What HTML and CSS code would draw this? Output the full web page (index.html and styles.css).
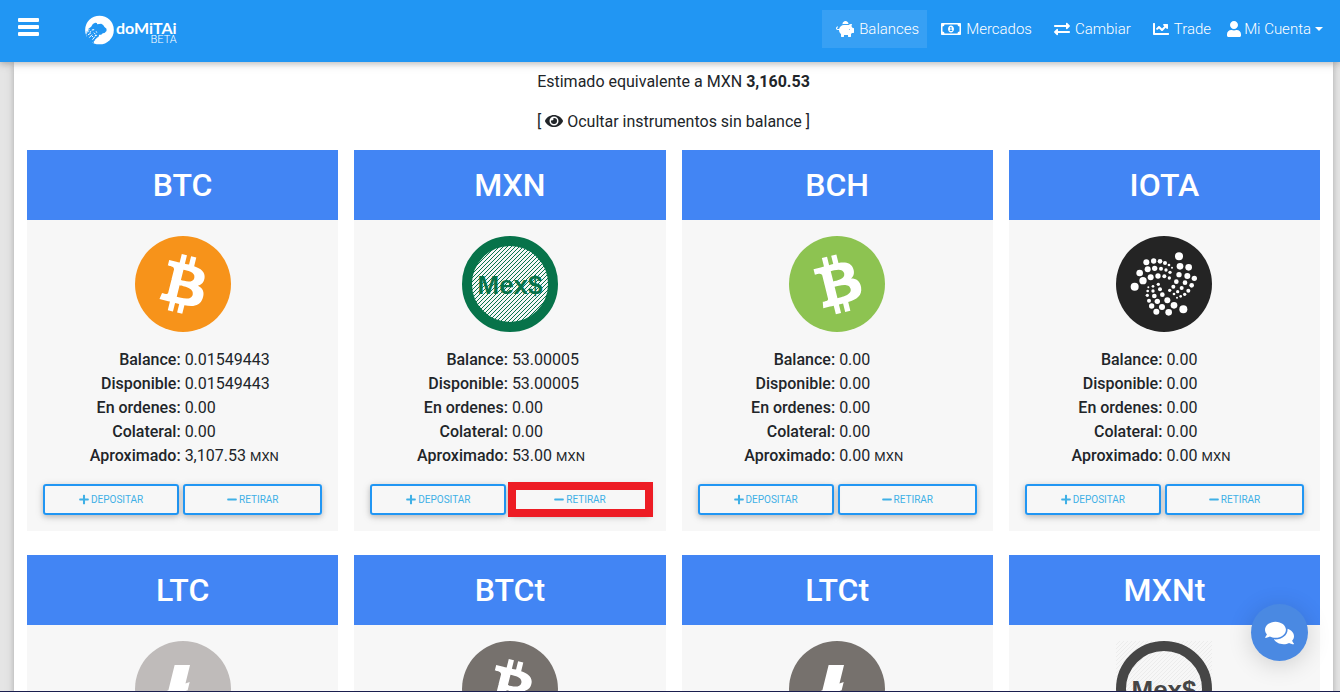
FILE: index.html
```html
<!DOCTYPE html>
<html lang="es">
<head>
    <meta charset="UTF-8">
    <meta name="viewport" content="width=device-width, initial-scale=1.0">
    <title>Domitai - Balances</title>
    <link rel="stylesheet" href="styles.css">
</head>
<body>
    <!-- icons -->
    <svg class="sprite" aria-hidden="true">
        <symbol id="i-bars" viewBox="0 0 21 18"><path d="M1 0h19a1 1 0 0 1 1 1v2a1 1 0 0 1-1 1H1a1 1 0 0 1-1-1V1a1 1 0 0 1 1-1zM1 7h19a1 1 0 0 1 1 1v2a1 1 0 0 1-1 1H1a1 1 0 0 1-1-1V8a1 1 0 0 1 1-1zM1 14h19a1 1 0 0 1 1 1v2a1 1 0 0 1-1 1H1a1 1 0 0 1-1-1v-2a1 1 0 0 1 1-1z"/></symbol>
        <symbol id="i-piggy" viewBox="0 0 576 512"><path d="M560 224h-29.5c-8.8-20-21.6-37.7-37.4-52.5L512 96h-32c-29.4 0-55.4 13.5-73 34.3-7.6-1.1-15.1-2.3-23-2.3H256c-77.4 0-141.9 55-156.8 128H56c-14.8 0-26.5-13.5-23.5-28.8C34.7 215.8 45.4 208 57 208h1c3.3 0 6-2.7 6-6v-20c0-3.3-2.7-6-6-6-28.5 0-53.9 20.4-57.5 48.6C-3.9 258.8 22.7 288 56 288h40c0 52.2 25.4 98.1 64 127.3V496c0 8.8 7.2 16 16 16h64c8.8 0 16-7.2 16-16v-48h128v48c0 8.8 7.2 16 16 16h64c8.8 0 16-7.2 16-16v-80.7c11.8-8.9 22.3-19.4 31.3-31.3H560c8.8 0 16-7.2 16-16V240c0-8.8-7.2-16-16-16zm-128 64c-8.8 0-16-7.2-16-16s7.2-16 16-16 16 7.2 16 16-7.2 16-16 16zM256 96h128c5.4 0 10.7.4 15.9.8 0-.3.1-.5.1-.8 0-53-43-96-96-96s-96 43-96 96c0 2.1.5 4.1.6 6.2 15.2-3.9 31-6.2 47.4-6.2z"/></symbol>
        <symbol id="i-money" viewBox="0 0 640 512"><path d="M320 144c-53.02 0-96 50.14-96 112 0 61.85 42.98 112 96 112 53 0 96-50.13 96-112 0-61.86-42.98-112-96-112zm40 168c0 4.42-3.58 8-8 8h-64c-4.42 0-8-3.58-8-8v-16c0-4.42 3.58-8 8-8h16v-55.44l-.47.31a7.992 7.992 0 0 1-11.09-2.22l-8.88-13.31a7.992 7.992 0 0 1 2.22-11.09l15.33-10.22a23.99 23.99 0 0 1 13.31-4.03H328c4.42 0 8 3.58 8 8v88h16c4.42 0 8 3.58 8 8v16zM608 64H32C14.33 64 0 78.33 0 96v320c0 17.67 14.33 32 32 32h576c17.67 0 32-14.33 32-32V96c0-17.67-14.33-32-32-32zm-16 272c-35.35 0-64 28.65-64 64H112c0-35.35-28.65-64-64-64V176c35.35 0 64-28.65 64-64h416c0 35.35 28.65 64 64 64v160z"/></symbol>
        <symbol id="i-exchange" viewBox="0 0 512 512"><path d="M0 168v-16c0-13.255 10.745-24 24-24h360V80c0-21.367 25.899-32.042 40.971-16.971l80 80c9.372 9.373 9.372 24.569 0 33.941l-80 80C409.956 271.982 384 261.456 384 240v-48H24c-13.255 0-24-10.745-24-24zm488 152H128v-48c0-21.314-25.862-32.08-40.971-16.971l-80 80c-9.372 9.373-9.372 24.569 0 33.941l80 80C102.057 463.997 128 453.437 128 432v-48h360c13.255 0 24-10.745 24-24v-16c0-13.255-10.745-24-24-24z"/></symbol>
        <symbol id="i-chart" viewBox="0 0 512 512"><path d="M496 384H64V80c0-8.84-7.16-16-16-16H16C7.16 64 0 71.16 0 80v336c0 17.67 14.33 32 32 32h464c8.84 0 16-7.16 16-16v-32c0-8.84-7.16-16-16-16zM464 96H345.94c-21.38 0-32.09 25.85-16.97 40.97l32.4 32.4L288 242.75l-73.37-73.37c-12.5-12.5-32.76-12.5-45.25 0l-68.69 68.69c-6.25 6.25-6.25 16.38 0 22.63l22.62 22.62c6.25 6.25 16.38 6.25 22.63 0L192 237.25l73.37 73.37c12.5 12.5 32.76 12.5 45.25 0l96-96 32.4 32.4c15.12 15.12 40.97 4.41 40.97-16.97V112c.01-8.84-7.15-16-15.99-16z"/></symbol>
        <symbol id="i-user" viewBox="0 0 448 512"><path d="M224 256c70.7 0 128-57.3 128-128S294.7 0 224 0 96 57.3 96 128s57.3 128 128 128zm89.6 32h-16.7c-22.2 10.2-46.9 16-72.9 16s-50.6-5.8-72.9-16h-16.7C60.2 288 0 348.2 0 422.4V464c0 26.5 21.5 48 48 48h352c26.5 0 48-21.5 48-48v-41.6c0-74.2-60.2-134.4-134.4-134.4z"/></symbol>
        <symbol id="i-eye" viewBox="0 0 576 512"><path d="M572.52 241.4C518.29 135.59 410.93 64 288 64S57.68 135.64 3.48 241.41a32.35 32.35 0 0 0 0 29.19C57.71 376.41 165.07 448 288 448s230.32-71.64 284.52-177.41a32.35 32.35 0 0 0 0-29.19zM288 400a144 144 0 1 1 144-144 143.93 143.93 0 0 1-144 144zm0-240a95.31 95.31 0 0 0-25.31 3.79 47.85 47.85 0 0 1-66.9 66.9A95.78 95.78 0 1 0 288 160z"/></symbol>
        <symbol id="i-comments" viewBox="0 0 576 512"><path d="M416 192c0-88.4-93.1-160-208-160S0 103.6 0 192c0 34.3 14.1 65.9 38 92-13.4 30.2-35.5 54.2-35.8 54.5-2.2 2.3-2.8 5.7-1.5 8.7S4.8 352 8 352c36.6 0 66.9-12.3 88.7-25 32.2 15.7 70.3 25 111.3 25 114.9 0 208-71.6 208-160zm122 220c23.9-26 38-57.7 38-92 0-66.9-53.5-124.2-129.3-148.1.9 6.6 1.3 13.3 1.3 20.1 0 105.9-107.7 192-240 192-10.8 0-21.3-.8-31.7-1.9C207.8 439.6 281.8 480 368 480c41 0 79.1-9.2 111.3-25 21.8 12.7 52.1 25 88.7 25 3.2 0 6.1-1.9 7.3-4.8 1.3-2.9.7-6.3-1.5-8.7-.3-.3-22.4-24.2-35.8-54.5z"/></symbol>
        <symbol id="i-plus" viewBox="0 0 448 512"><path d="M416 208H272V64c0-17.67-14.33-32-32-32h-32c-17.67 0-32 14.33-32 32v144H32c-17.67 0-32 14.33-32 32v32c0 17.67 14.33 32 32 32h144v144c0 17.67 14.33 32 32 32h32c17.67 0 32-14.33 32-32V304h144c17.67 0 32-14.33 32-32v-32c0-17.67-14.33-32-32-32z"/></symbol>
        <symbol id="i-minus" viewBox="0 0 448 512"><path d="M416 208H32c-17.67 0-32 14.33-32 32v32c0 17.67 14.33 32 32 32h384c17.67 0 32-14.33 32-32v-32c0-17.67-14.33-32-32-32z"/></symbol>
        <symbol id="c-btc" viewBox="0 0 32 32"><path d="M23.189 14.02c.314-2.096-1.283-3.223-3.465-3.975l.708-2.84-1.728-.43-.69 2.765c-.454-.114-.92-.22-1.385-.326l.695-2.783L15.596 6l-.708 2.839c-.376-.086-.746-.17-1.104-.26l.002-.009-2.384-.595-.46 1.846s1.283.294 1.256.312c.7.175.826.638.805 1.006l-.806 3.235c.048.012.11.03.18.057l-.183-.045-1.13 4.532c-.086.212-.303.531-.793.41.018.025-1.256-.313-1.256-.313l-.858 1.978 2.25.561c.418.105.828.215 1.231.318l-.715 2.872 1.727.43.708-2.84c.472.127.93.245 1.378.357l-.706 2.828 1.728.43.715-2.866c2.948.558 5.164.333 6.097-2.333.752-2.146-.037-3.385-1.588-4.192 1.13-.26 1.98-1.003 2.207-2.538zm-3.95 5.538c-.533 2.147-4.148.986-5.32.695l.95-3.805c1.172.293 4.929.872 4.37 3.11zm.535-5.569c-.487 1.953-3.495.96-4.47.717l.86-3.45c.975.243 4.118.696 3.61 2.733z"/></symbol>
        <symbol id="c-ltc" viewBox="0 0 32 32"><path d="M10.427 19.214L9 19.768l.688-2.759 1.444-.58L13.213 8h5.129l-1.519 6.196 1.41-.571-.68 2.75-1.427.571-.848 3.483H23L22.127 24H9.252z"/></symbol>
    </svg>

    <header class="navbar">
        <button class="menu-btn" type="button" aria-label="Menu"><svg class="icon-bars"><use href="#i-bars"/></svg></button>
        <a class="brand" href="#">
            <svg class="brand-logo" viewBox="254 45 86 90">
                <circle cx="297" cy="90" r="43" fill="#fff"/>
                <path d="M272 80l5-8 7-4 5 1 1 4 12-2 6 4 4 6 6 5 0 7-6 6-5 1-5 4-6 0-2 7-5 2-5 8-6 6-5 2-9-6-5-9-2-11 4-6 2-10z" fill="#2196f3"/>
                <path d="M257 84l10-5M256 92l11-3M262 105l9-6M266 113l9-9M276 119l7-9M282 126l5-9M290 119l5-5M280 98l5 5M274 90l7-1M268 97l4-3M283 107l6-1M275 108l2 3M286 95l4 2M262 97l3-3" stroke="#fff" stroke-width="3"/>
                <path d="M258 96l3 2M259 103l3 2M263 112l3 3M270 121l4 3M277 126l3 2" stroke="#2196f3" stroke-width="3"/>
            </svg>
            <span class="brand-text">
                <span class="brand-name">doMiTAi</span>
                <span class="brand-beta">BETA</span>
            </span>
        </a>
        <nav class="nav">
            <a class="nav-link active" href="#"><svg class="icon w18"><use href="#i-piggy"/></svg>Balances</a>
            <a class="nav-link" href="#"><svg class="icon w20"><use href="#i-money"/></svg>Mercados</a>
            <a class="nav-link" href="#"><svg class="icon w16"><use href="#i-exchange"/></svg>Cambiar</a>
            <a class="nav-link" href="#"><svg class="icon w16"><use href="#i-chart"/></svg>Trade</a>
            <a class="nav-link account" href="#"><svg class="icon w14"><use href="#i-user"/></svg>Mi Cuenta<span class="caret"></span></a>
        </nav>
    </header>

    <main class="sheet">
        <p class="summary">Estimado equivalente a MXN <strong>3,160.53</strong></p>
        <p class="summary">[ <a href="#"><svg class="icon w18"><use href="#i-eye"/></svg> Ocultar instrumentos sin balance</a> ]</p>

        <div class="cards">
            <section class="card">
                <h2>BTC</h2>
                <div class="card-body">
                    <svg class="coin" viewBox="0 0 32 32"><circle cx="16" cy="16" r="16" fill="#f7931a"/><use href="#c-btc" width="32" height="32" fill="#fff"/></svg>
                    <dl>
                        <dt>Balance:</dt><dd>0.01549443</dd>
                        <dt>Disponible:</dt><dd>0.01549443</dd>
                        <dt>En ordenes:</dt><dd>0.00</dd>
                        <dt>Colateral:</dt><dd>0.00</dd>
                        <dt>Aproximado:</dt><dd>3,107.53 <small>MXN</small></dd>
                    </dl>
                    <div class="actions">
                        <button class="btn" type="button"><svg><use href="#i-plus"/></svg>DEPOSITAR</button>
                        <button class="btn" type="button"><svg><use href="#i-minus"/></svg>RETIRAR</button>
                    </div>
                </div>
            </section>

            <section class="card">
                <h2>MXN</h2>
                <div class="card-body">
                    <svg class="coin" viewBox="0 0 96 96">
                        <defs>
                            <pattern id="hatch" width="4" height="4" patternUnits="userSpaceOnUse">
                                <path d="M-1 1l2-2M0 4l4-4M3 5l2-2" stroke="#07734a"/>
                            </pattern>
                        </defs>
                        <circle cx="48" cy="48" r="43" fill="#f7f7f7"/>
                        <circle cx="48" cy="48" r="43" fill="url(#hatch)"/>
                        <circle cx="48" cy="48" r="43" fill="none" stroke="#07734a" stroke-width="10"/>
                        <text class="mex" x="48" y="58" fill="#07734a">Mex$</text>
                    </svg>
                    <dl>
                        <dt>Balance:</dt><dd>53.00005</dd>
                        <dt>Disponible:</dt><dd>53.00005</dd>
                        <dt>En ordenes:</dt><dd>0.00</dd>
                        <dt>Colateral:</dt><dd>0.00</dd>
                        <dt>Aproximado:</dt><dd>53.00 <small>MXN</small></dd>
                    </dl>
                    <div class="actions">
                        <button class="btn" type="button"><svg><use href="#i-plus"/></svg>DEPOSITAR</button>
                        <button class="btn marked" type="button"><svg><use href="#i-minus"/></svg>RETIRAR</button>
                    </div>
                </div>
            </section>

            <section class="card">
                <h2>BCH</h2>
                <div class="card-body">
                    <svg class="coin" viewBox="0 0 32 32"><circle cx="16" cy="16" r="16" fill="#8dc351"/><g transform="rotate(-28 16 16)"><use href="#c-btc" width="32" height="32" fill="#fff"/></g></svg>
                    <dl>
                        <dt>Balance:</dt><dd>0.00</dd>
                        <dt>Disponible:</dt><dd>0.00</dd>
                        <dt>En ordenes:</dt><dd>0.00</dd>
                        <dt>Colateral:</dt><dd>0.00</dd>
                        <dt>Aproximado:</dt><dd>0.00 <small>MXN</small></dd>
                    </dl>
                    <div class="actions">
                        <button class="btn" type="button"><svg><use href="#i-plus"/></svg>DEPOSITAR</button>
                        <button class="btn" type="button"><svg><use href="#i-minus"/></svg>RETIRAR</button>
                    </div>
                </div>
            </section>

            <section class="card">
                <h2>IOTA</h2>
                <div class="card-body">
                    <svg class="coin" viewBox="33 33 288 288">
                        <circle cx="177" cy="177" r="144" fill="#242424"/>
                        <g fill="#fff">
                            <circle cx="222" cy="94" r="12"/><circle cx="225" cy="124" r="10"/><circle cx="251" cy="127" r="10"/>
                            <circle cx="222" cy="149" r="8"/><circle cx="247" cy="153" r="9"/><circle cx="268" cy="160" r="8"/>
                            <circle cx="214" cy="170" r="7"/><circle cx="240" cy="173" r="7"/><circle cx="260" cy="181" r="7"/>
                            <circle cx="205" cy="185" r="6"/><circle cx="230" cy="189" r="6"/><circle cx="250" cy="197" r="6"/>
                            <circle cx="194" cy="196" r="5"/><circle cx="218" cy="200" r="5"/><circle cx="239" cy="208" r="5"/>
                            <circle cx="207" cy="207" r="4"/><circle cx="227" cy="214" r="4"/><circle cx="216" cy="218" r="3"/>
                            <circle cx="124" cy="112" r="9"/><circle cx="146" cy="108" r="8"/><circle cx="165" cy="109" r="7"/>
                            <circle cx="180" cy="114" r="6"/><circle cx="192" cy="120" r="4"/><circle cx="201" cy="128" r="3"/>
                            <circle cx="104" cy="144" r="10"/><circle cx="128" cy="133" r="9"/><circle cx="149" cy="130" r="8"/>
                            <circle cx="168" cy="131" r="6"/><circle cx="183" cy="135" r="5"/><circle cx="195" cy="142" r="5"/>
                            <circle cx="89" cy="185" r="12"/><circle cx="114" cy="167" r="11"/><circle cx="137" cy="157" r="9"/>
                            <circle cx="159" cy="153" r="8"/><circle cx="178" cy="154" r="6"/><circle cx="193" cy="159" r="5"/>
                            <circle cx="160" cy="178" r="5"/><circle cx="144" cy="184" r="4"/><circle cx="130" cy="187" r="3"/>
                            <circle cx="165" cy="193" r="6"/><circle cx="144" cy="198" r="5"/><circle cx="128" cy="198" r="4"/>
                            <circle cx="172" cy="209" r="7"/><circle cx="148" cy="213" r="7"/><circle cx="127" cy="211" r="5"/>
                            <circle cx="187" cy="226" r="9"/><circle cx="157" cy="229" r="8"/><circle cx="132" cy="227" r="6"/>
                            <circle cx="207" cy="241" r="10"/><circle cx="171" cy="246" r="9"/><circle cx="140" cy="243" r="8"/>
                            <circle cx="235" cy="253" r="12"/><circle cx="191" cy="262" r="10"/><circle cx="154" cy="260" r="9"/>
                        </g>
                    </svg>
                    <dl>
                        <dt>Balance:</dt><dd>0.00</dd>
                        <dt>Disponible:</dt><dd>0.00</dd>
                        <dt>En ordenes:</dt><dd>0.00</dd>
                        <dt>Colateral:</dt><dd>0.00</dd>
                        <dt>Aproximado:</dt><dd>0.00 <small>MXN</small></dd>
                    </dl>
                    <div class="actions">
                        <button class="btn" type="button"><svg><use href="#i-plus"/></svg>DEPOSITAR</button>
                        <button class="btn" type="button"><svg><use href="#i-minus"/></svg>RETIRAR</button>
                    </div>
                </div>
            </section>

            <section class="card">
                <h2>LTC</h2>
                <div class="card-body">
                    <svg class="coin" viewBox="0 0 32 32"><circle cx="16" cy="16" r="16" fill="#bfbbba"/><use href="#c-ltc" width="32" height="32" fill="#fff"/></svg>
                </div>
            </section>

            <section class="card">
                <h2>BTCt</h2>
                <div class="card-body">
                    <svg class="coin" viewBox="0 0 32 32"><circle cx="16" cy="16" r="16" fill="#76716d"/><use href="#c-btc" width="32" height="32" fill="#fff"/></svg>
                </div>
            </section>

            <section class="card">
                <h2>LTCt</h2>
                <div class="card-body">
                    <svg class="coin" viewBox="0 0 32 32"><circle cx="16" cy="16" r="16" fill="#76716d"/><use href="#c-ltc" width="32" height="32" fill="#fff"/></svg>
                </div>
            </section>

            <section class="card">
                <h2>MXNt</h2>
                <div class="card-body">
                    <svg class="coin" viewBox="0 0 96 96">
                        <defs>
                            <pattern id="hatch-light" width="4" height="4" patternUnits="userSpaceOnUse">
                                <path d="M-1 1l2-2M0 4l4-4M3 5l2-2" stroke="#ececec"/>
                            </pattern>
                        </defs>
                        <rect width="96" height="96" fill="url(#hatch-light)"/>
                        <circle cx="48" cy="48" r="43" fill="none" stroke="#464646" stroke-width="10"/>
                        <text class="mex" x="48" y="58" fill="#464646">Mex$</text>
                    </svg>
                </div>
            </section>
        </div>
    </main>

    <button class="chat" type="button" aria-label="Chat"><svg><use href="#i-comments"/></svg></button>
    <div class="bottom-line"></div>
</body>
</html>
```

FILE: styles.css
```css
* {
  box-sizing: border-box;
}

html {
  scrollbar-width: none;
}

body {
  margin: 0;
  font-family: Roboto, sans-serif;
  font-size: 16px;
  font-weight: 400;
  line-height: 24px;
  color: #212529;
  background-color: #e5e5e5;
}

a {
  color: inherit;
  text-decoration: none;
}

button {
  font-family: inherit;
  cursor: pointer;
}

.sprite {
  display: none;
}

/* navbar */
.navbar {
  position: sticky;
  top: 0;
  z-index: 10;
  display: flex;
  align-items: center;
  height: 62px;
  padding: 0 9px 4px 18px;
  color: #fff;
  background-color: #2196f3;
  box-shadow: 0 2px 5px rgba(0, 0, 0, 0.16), 0 2px 10px rgba(0, 0, 0, 0.12);
}

.menu-btn {
  display: flex;
  padding: 0;
  border: none;
  background: none;
  color: #fff;
}

.icon-bars {
  width: 21px;
  height: 18px;
  margin-bottom: 4px;
  fill: currentColor;
}

.brand {
  display: flex;
  align-items: center;
  gap: 2px;
  margin: 2px auto 0 46px;
}

.brand-logo {
  width: 29px;
  height: 30px;
}

.brand-text {
  display: flex;
  flex-direction: column;
  align-items: flex-end;
  padding-top: 6px;
}

.brand-name {
  font-family: Lato, sans-serif;
  font-size: 16px;
  font-weight: 700;
  line-height: 13px;
}

.brand-beta {
  font-size: 11px;
  font-weight: 300;
  line-height: 12px;
}

.nav {
  display: flex;
}

.nav-link {
  display: flex;
  align-items: center;
  padding: 7px 8px 7px 14px;
  font-size: 15px;
  font-weight: 300;
}

.nav-link .icon {
  margin-right: 5px;
}

.nav-link.active {
  background-color: rgba(255, 255, 255, 0.1);
}

.nav-link.account {
  padding-left: 8px;
}

.nav-link.account .icon {
  margin-right: 3px;
}

.caret {
  margin-left: 4px;
  border-top: 4px solid;
  border-left: 4px solid transparent;
  border-right: 4px solid transparent;
}

.icon {
  height: 16px;
  fill: currentColor;
}

.w14 { width: 14px; }
.w16 { width: 16px; }
.w18 { width: 18px; }
.w20 { width: 20px; }

/* content */
.sheet {
  margin: 0 7px 0 14px;
  padding: 8px 13px 0;
  background-color: #fff;
  box-shadow: 0 2px 5px rgba(0, 0, 0, 0.16), 0 2px 10px rgba(0, 0, 0, 0.12);
}

.summary {
  margin: 0 0 16px;
  text-align: center;
}

.summary .icon {
  vertical-align: -2px;
}

.summary strong {
  font-weight: 700;
}

.cards {
  display: grid;
  grid-template-columns: repeat(4, 1fr);
  gap: 24px 16px;
}

.card {
  background-color: #f7f7f7;
}

.card h2 {
  margin: 0;
  padding: 15px;
  font-size: 32px;
  font-weight: 500;
  line-height: 40px;
  text-align: center;
  color: #fff;
  background-color: #4285f4;
}

.card-body {
  padding: 16px;
}

.coin {
  display: block;
  width: 96px;
  height: 96px;
  margin: 0 auto 16px;
}

.mex {
  font-family: "Liberation Sans", sans-serif;
  font-size: 26px;
  font-weight: 700;
  text-anchor: middle;
}

dl {
  display: grid;
  grid-template-columns: 1fr 1fr;
  column-gap: 4px;
  margin: 0 0 16px;
}

dt {
  font-weight: 500;
  text-align: right;
}

dd {
  margin: 0;
}

dd small {
  font-size: 13px;
  line-height: 1;
}

.actions {
  display: grid;
  grid-template-columns: 49fr 50fr;
  gap: 4px;
}

.btn {
  position: relative;
  display: flex;
  align-items: center;
  justify-content: center;
  gap: 2px;
  height: 31px;
  padding: 0;
  border: 2px solid #2196f3;
  border-radius: 3px;
  font-size: 10px;
  font-weight: 400;
  color: #3fb0e6;
  background: none;
  box-shadow: 0 2px 5px rgba(0, 0, 0, 0.16), 0 2px 10px rgba(0, 0, 0, 0.12);
}

.btn svg {
  width: 10px;
  height: 11px;
  fill: currentColor;
}

/* red frame around the highlighted button */
.btn.marked::after {
  content: "";
  position: absolute;
  top: -4px;
  right: -5px;
  bottom: -4px;
  left: -4px;
  border: 8px solid #ed1c24;
}

/* floating chat */
.chat {
  position: fixed;
  right: 32px;
  bottom: 31px;
  z-index: 20;
  display: flex;
  align-items: center;
  justify-content: center;
  width: 57px;
  height: 57px;
  padding: 0;
  border: none;
  border-radius: 50%;
  color: #fff;
  background-color: #4a89e2;
  box-shadow: 0 4px 24px rgba(0, 0, 0, 0.16);
}

.chat svg {
  width: 29px;
  height: 26px;
  fill: currentColor;
}

.bottom-line {
  position: fixed;
  right: 0;
  bottom: 0;
  left: 0;
  z-index: 30;
  height: 1px;
  background-color: #1a1e4e;
}
```
